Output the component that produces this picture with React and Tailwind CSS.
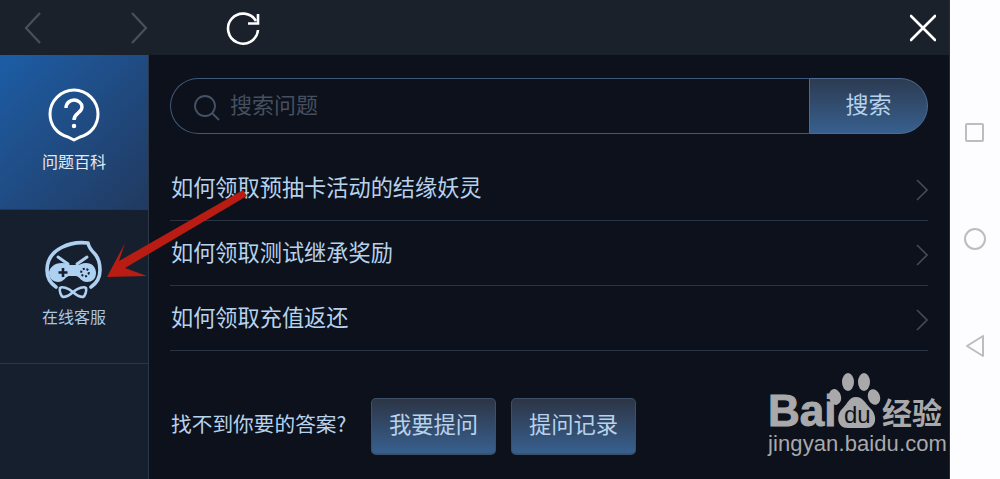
const Chevron = () => (
	<svg className="mt-[4px]" width="12" height="22" viewBox="0 0 12 22" fill="none" stroke="#434b57" strokeWidth="1.6">
		<path d="M1 1l10 10L1 21" />
	</svg>
)

const Row = ({ text }) => (
	<div className="h-[65px] flex items-center justify-between border-b border-[#2a3342] pl-px">
		<span className="mb-[2px] text-[22.2px] text-[#b7d2ec]">{text}</span>
		<Chevron />
	</div>
)

const AskButton = ({ text }) => (
	<div className="w-[125px] h-[57px] rounded-[5px] border border-[#3d5068] border-b-2 bg-gradient-to-b from-[#2c3546] to-[#37608f] flex items-center justify-center pb-[5px] text-[22.3px] text-[#b7d2ec]">
		{text}
	</div>
)

const HeadIcon = () => (
	<svg width="60" height="60" viewBox="0 0 60 60" fill="none">
		<path d="M44 3C28 1 3 8 3 30c0 7 3 13 9 17M44 3c1 5 3 7 6 10 4 4 6 10 6 17 0 7-3 13-9 17" stroke="#aed1f2" strokeWidth="3.6" strokeLinecap="round" />
		<path d="M14 17l10 7M43 17l-10 7" stroke="#aed1f2" strokeWidth="3" strokeLinecap="round" />
		<path d="M18 23c4 0 6 2 9 2h6c3 0 5-2 9-2 6 0 10 4 10 10s-4 9-9 9c-6 0-7-5-11-6h-7c-4 1-5 6-11 6-5 0-9-4-9-9s5-10 13-10z" fill="#aed1f2" />
		<path d="M19 28v9M14.500 32.500h9" stroke="#161f2e" strokeWidth="2.600" />
		<circle cx="41" cy="32.500" r="3.800" stroke="#161f2e" strokeWidth="2" strokeDasharray="2 1.800" />
		<path d="M29 52c-5-4-11-6-13-4-1 3 1 8 3 9 3 0 7-2 10-5zM29 52c5-4 11-6 13-4 1 3-1 8-3 9-3 0-7-2-10-5z" stroke="#aed1f2" strokeWidth="2.600" strokeLinejoin="round" />
	</svg>
)

const QuestionIcon = () => (
	<svg width="52" height="56" viewBox="0 0 52 56" fill="none" stroke="#ffffff">
		<path d="M20 49C9 46 2 37 2 26 2 13 13 2 26 2s24 11 24 24c0 11-7 20-18 23l-6 3-6-3z" strokeWidth="3" strokeLinejoin="round" />
		<path d="M18 20c0-5 4-8 8-8s8 3 8 7c0 6-8 6-8 13" strokeWidth="3.400" />
		<circle cx="26" cy="38" r="1.500" fill="#ffffff" strokeWidth="1.500" />
	</svg>
)

export default function App() {
	return (
		<div className="w-[1000px] h-[479px] overflow-hidden relative flex bg-white font-['Noto_Sans_CJK_SC','Noto_Sans',sans-serif]">
			<div className="w-[949px] flex flex-col bg-[#0c111b]">
				<div className="h-[55px] bg-[#1b212b] flex items-center pl-[24px] pr-[13px]">
					<svg width="18" height="32" viewBox="0 0 18 32" fill="none" stroke="#4b4f56" strokeWidth="2.200">
						<path d="M16 1L2 16l14 15" />
					</svg>
					<svg className="ml-[88px]" width="18" height="32" viewBox="0 0 18 32" fill="none" stroke="#4b4f56" strokeWidth="2.200">
						<path d="M2 1l14 15L2 31" />
					</svg>
					<svg className="ml-[78px]" width="34" height="34" viewBox="0 0 34 34" fill="none" stroke="#ffffff" strokeWidth="2.600">
						<path d="M30 10A15 15 0 1 0 32 19" />
						<path d="M22 12.500h10V3" />
					</svg>
					<svg className="ml-auto" width="26" height="28" viewBox="0 0 26 28" fill="none" stroke="#ffffff" strokeWidth="2.600" strokeLinecap="round">
						<path d="M1 2l24 24M25 2L1 26" />
					</svg>
				</div>
				<div className="flex-1 flex min-h-0">
					<div className="w-[149px] bg-[#161f2e] border-r border-[#2c3649] flex flex-col">
						<div className="h-[155px] bg-gradient-to-br from-[#1c5da6] to-[#203a60] flex flex-col items-center pt-[33px] border-b border-[#2c3649]">
							<QuestionIcon />
							<span className="mt-[5px] text-[16px] leading-[24px] text-[#e3eaf2]">问题百科</span>
						</div>
						<div className="h-[154px] flex flex-col items-center pt-[30px] border-b border-[#2c3649]">
							<HeadIcon />
							<span className="mt-[4px] text-[16px] leading-[24px] text-[#a9c6e2]">在线客服</span>
						</div>
					</div>
					<div className="flex-1 pt-[23px] px-[21px]">
						<div className="h-[56px] flex">
							<div className="flex-1 rounded-l-[28px] border border-r-0 border-[#3f5878] flex items-center pl-[23px]">
								<svg className="mt-[4px]" width="26" height="28" viewBox="0 0 26 28" fill="none" stroke="#465366" strokeWidth="1.800">
									<circle cx="11" cy="12" r="10" />
									<path d="M18 19l7 7" />
								</svg>
								<span className="ml-[10px] mb-[6px] text-[22px] text-[#454f5f]">搜索问题</span>
							</div>
							<div className="w-[119px] rounded-r-[28px] border border-[#4d6b90] bg-gradient-to-b from-[#2c3b52] to-[#37608f] flex items-center justify-center pb-[6px] text-[23px] text-[#b7d2ec]">
								搜索
							</div>
						</div>
						<div className="mt-[22px]">
							<Row text="如何领取预抽卡活动的结缘妖灵" />
							<Row text="如何领取测试继承奖励" />
							<Row text="如何领取充值返还" />
						</div>
						<div className="mt-[47px] flex items-center pl-px">
							<span className="w-[200px] mb-[5px] text-[20.7px] text-[#b7d2ec]">找不到你要的答案?</span>
							<AskButton text="我要提问" />
							<div className="w-[15px]" />
							<AskButton text="提问记录" />
						</div>
					</div>
				</div>
			</div>
			<div className="w-px bg-[#2a2a2a]" />
			<div className="flex-1 bg-[#fdfcfe] flex flex-col items-center pt-[123px] pr-px">
				<div className="w-[19px] h-[19px] rounded-[2px] border-2 border-[#bdbdbd]" />
				<div className="mt-[86px] w-[22px] h-[22px] rounded-full border-2 border-[#bdbdbd]" />
				<svg className="mt-[85px]" width="20" height="22" viewBox="0 0 20 22" fill="none" stroke="#bdbdbd" strokeWidth="2" strokeLinejoin="round">
					<path d="M18 1v20L2 11z" />
				</svg>
			</div>

			{/* red arrow drawn over the sidebar */}
			<svg className="absolute left-0 top-0 pointer-events-none" width="300" height="300" viewBox="0 0 300 300">
				<path d="M107 277L125 243 119 261 243 190 247 196 125 268 147 276z" fill="#b81c12" />
			</svg>

			{/* baidu watermark */}
			<div className="absolute left-[768px] top-[372px] w-[182px] h-[90px] text-[#a9a9ab]">
				<span className="absolute left-0 top-[15px] font-['Liberation_Sans',sans-serif] font-bold text-[44px] leading-[48px] [-webkit-text-stroke:1px_#a9a9ab]">Bai</span>
				<svg className="absolute left-[60px] top-0" width="56" height="60" viewBox="0 0 56 60" fill="#a9a9ab">
					<ellipse cx="20" cy="10" rx="6" ry="9" />
					<ellipse cx="36" cy="10" rx="6" ry="9" />
					<ellipse cx="7" cy="25" rx="6" ry="8" transform="rotate(-15 7 25)" />
					<ellipse cx="46" cy="25" rx="6" ry="8" transform="rotate(-20 46 25)" />
					<path d="M28 25c7 0 9 6 14 11 7 6 8 20-4 20H20C8 56 8 42 15 36c5-5 6-11 13-11z" />
				</svg>
				<span className="absolute left-[76px] top-[28px] font-['Liberation_Sans',sans-serif] text-[24px] leading-[30px] text-[#0c111b]">du</span>
				<span className="absolute left-[114px] top-[18px] font-bold text-[30px] leading-[42px]">经验</span>
				<span className="absolute left-0 top-[58px] font-['Liberation_Sans',sans-serif] text-[22px] leading-[28px] tracking-[0.1px]">jingyan.baidu.com</span>
			</div>
		</div>
	)
}
